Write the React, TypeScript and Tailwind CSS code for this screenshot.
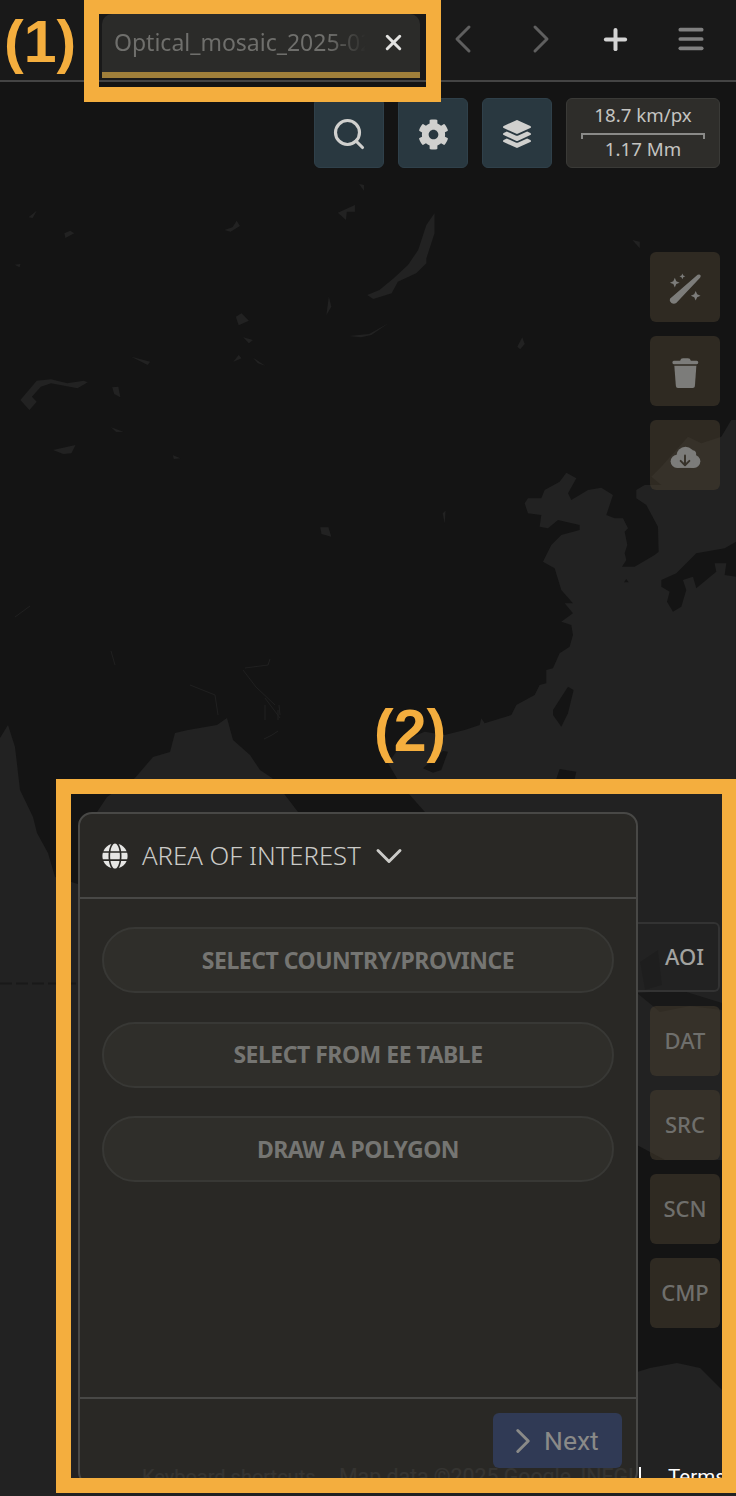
import { ChevronDown, ChevronLeft, ChevronRight, Menu, Plus, Search, X } from "lucide-react";
import type { ReactNode } from "react";
import { FaCog, FaGlobe, FaLayerGroup } from "react-icons/fa";

const LAND = "#141414";
const SEA = "#222222";

// [x,y] lists in reference px
const seaShapes = [
  "0,738 8,725 15,747 20,790 33,817 37,833 48,853 55,877 78,884 736,884 736,1496 0,1496",
  "135,778 153,757 170,752 175,733 188,730 217,725 227,718 233,740 250,755 260,770 272,778 298,812 97,812 107,797",
];

// traced at 3x from the east coast crop, drawn in its own group
const eastSea =
  "230,945 170,935 110,960 60,1030 90,1080 123,1122 174,1180 174,1400 1104,1400 1104,0 1090,0 1060,50 1000,70 960,50 880,140 850,170 880,195 830,195 805,210 805,235 835,255 870,320 872,395 860,405 800,440 762,440 775,420 770,400 778,375 770,335 780,325 765,295 740,295 715,285 735,225 700,203 660,210 610,240 600,220 625,175 595,158 575,185 530,210 520,235 480,235 470,250 480,280 520,285 515,320 540,325 570,300 635,315 635,330 580,345 550,375 525,425 560,445 580,510 615,550 590,550 615,580 580,605 610,615 615,645 605,680 575,700 555,745 535,750 535,790 515,795 500,825 445,855 430,885 350,910 340,895 335,915 290,930";

const eastLand = [
  "880,480 925,460 985,400 1070,385 1104,365 1104,470 1070,465 1075,430 1040,430 1045,455 985,505 975,470 945,480 955,510 940,560 915,575 897,545 905,515 880,500",
  "555,870 600,800 617,810 600,880 580,920 555,885",
  "165,1045 225,993 240,995 220,1050 195,1058",
  "565,1077 575,1047 625,1055 620,1077",
  "768,487 775,477 782,487",
];

// lakes and other flecks, traced from the crop of the north
const northFlecks = [
  "1065,130 1065,190 1045,265 1045,280 1020,310 975,335 960,370 915,387 900,375 930,360 965,325 1000,285 1025,240 1045,165",
  "50,690 90,632 125,628 165,640 205,632 215,637 190,655 125,640 100,650 78,680 90,695 72,720",
  "578,440 592,430 610,452 585,466",
  "550,180 570,172 580,152 588,168 565,185",
  "158,190 172,182 182,190 160,204",
  "130,840 185,825 175,850 155,852",
  "275,652 290,650 295,682 280,672",
  "322,560 368,575 362,585",
  "800,1072 805,1072 812,1100 788,1092 785,1072",
  "800,435 806,380 812,410",
  "1268,530 1280,502 1286,522 1275,538",
  "828,128 870,105 870,125 850,125 848,150",
  "596,502 620,510 610,520",
  "572,575 585,555 592,565",
  "620,563 650,587 632,580",
  "855,498 905,492 952,460 910,495 885,502",
  "272,772 302,785 285,786",
  "880,42 892,45 892,62",
  "70,142 90,122 80,144",
  "1085,1030 1092,1022 1090,1060",
  "36,284 50,282 48,292",
  "424,856 442,865 426,867",
  "1550,210 1568,215 1568,235",
];

function Sparkle({ x, y, r }: { x: number; y: number; r: number }) {
  const k = r * 0.3;
  return (
    <polygon
      points={`${x},${y - r} ${x + k},${y - k} ${x + r},${y} ${x + k},${y + k} ${x},${y + r} ${x - k},${y + k} ${x - r},${y} ${x - k},${y - k}`}
    />
  );
}

function WandIcon() {
  return (
    <svg width="70" height="70" viewBox="0 0 70 70" fill="currentColor">
      <path d="M19.5 47 L48 22.5 Q50 21.5 51 23 Q51.5 24.5 50.5 25.5 L26 51.5 Q23.5 53 21 51.5 Q18.5 49.5 19.5 47 Z" />
      <Sparkle x={24.5} y={30.5} r={5} />
      <Sparkle x={32.3} y={24} r={3} />
      <Sparkle x={46} y={44} r={5} />
    </svg>
  );
}

function TrashIcon() {
  return (
    <svg width="70" height="70" viewBox="0 0 70 70" fill="currentColor">
      <path d="M30 24.5 Q30.5 22 33 22 L38 22 Q40.5 22 41 24.5 L47 24.5 Q48.7 24.5 48.7 26.2 Q48.7 28 47 28 L23.5 28 Q22 28 22 26.2 Q22 24.5 23.5 24.5 Z" />
      <path d="M24 29.5 L46.7 29.5 L45.2 50.5 Q45 52.5 43 52.5 L27.7 52.5 Q25.8 52.5 25.6 50.5 Z" />
    </svg>
  );
}

function CloudIcon() {
  return (
    <svg width="70" height="70" viewBox="0 0 70 70">
      <g fill="currentColor">
        <circle cx="35.5" cy="36" r="9.4" />
        <circle cx="27" cy="41.5" r="6.8" />
        <circle cx="44" cy="41.5" r="6.8" />
        <circle cx="42.5" cy="34" r="4" />
        <rect x="27" y="40" width="17" height="8.3" />
      </g>
      <g fill="none" stroke="#37322a" strokeWidth="2" strokeLinecap="round" strokeLinejoin="round">
        <path d="M35 35.5 V45" />
        <path d="M30.5 41 L35 45.5 L39.5 41" />
      </g>
    </svg>
  );
}

function ToolButton({ blue, children }: { blue?: boolean; children: ReactNode }) {
  return (
    <div
      className={`flex h-[70px] w-[70px] items-center justify-center rounded-md border ${
        blue ? "border-[#2f404a] bg-[#293840] text-[#d0d0ce]" : "border-transparent bg-[#4a4030]/50 text-[#7c7c7a]"
      }`}
    >
      {children}
    </div>
  );
}

function StepTab({ label }: { label: string }) {
  return (
    <div className="flex h-[70px] w-[70px] items-center justify-center rounded-md bg-[#4a4030]/50 pb-[2px] text-[22px] font-medium text-[#6f6f6c]">
      {label}
    </div>
  );
}

function ActionPill({ label }: { label: string }) {
  return (
    <div className="flex h-[66px] items-center justify-center rounded-full border-2 border-[#383835] bg-[#2f2e2a] text-[23px] font-bold tracking-[-0.5px] text-[#757572]">
      {label}
    </div>
  );
}

export default function App() {
  return (
    <div className="relative h-[1496px] w-[736px] overflow-hidden bg-[#141414] font-['Noto_Sans',sans-serif]">
      <svg className="absolute inset-0" width="736" height="1496" viewBox="0 0 736 1496">
        <rect width="736" height="1496" fill={LAND} />
        {seaShapes.map((p) => (
          <polygon key={p} points={p} fill={SEA} />
        ))}
        <polygon points="637,1145 665,1160 736,1160 736,1400 722,1390 700,1368 677,1363 650,1368 637,1372" fill={LAND} />
        <polygon points="640,962 658,950 662,985 645,990" fill="#181818" />
        <polygon points="637,993 680,990 722,1003 722,1010 690,1006 660,1012" fill="#181818" />
        <line x1="0" y1="983.5" x2="76" y2="983.5" stroke="#191919" strokeWidth="2" strokeDasharray="12 4" />
        <g transform="translate(368 420) scale(0.3333)">
          <polygon points={eastSea} fill={SEA} />
          {eastLand.map((p) => (
            <polygon key={p} points={p} fill={LAND} />
          ))}
        </g>
        <g transform="translate(0 170) scale(0.408 0.3333)">
          {northFlecks.map((p) => (
            <polygon key={p} points={p} fill="#222222" />
          ))}
        </g>
        <g stroke="#202020" strokeWidth="1" fill="none">
          <path d="M15 617 L30 606" />
          <path d="M111 651 L115 665" />
          <path d="M190 685 L215 695 L218 715" />
          <path d="M245 668 L268 665 L270 659" />
          <path d="M265 698 L280 718" />
          <path d="M265 705 L265 720" />
          <path d="M279 705 L280 715" />
          <path d="M264 739 L272 735" />
          <path d="M278 731 L272 735" />
          <path d="M243 670 L256 687 L275 705" />
          <path d="M278 710 L278 720" />
        </g>
      </svg>

      <div className="absolute bottom-[4px] left-[142px] flex h-[28px] items-start whitespace-nowrap font-['Roboto',sans-serif] leading-[26px] text-white">
        <span className="w-[197px] shrink-0 text-[20px]">Keyboard shortcuts</span>
        <span className="w-[300px] shrink-0 text-[21.3px]">Map data ©2025 Google, INEGI</span>
        <span className="mt-[3px] h-[23px] w-[2px] shrink-0 bg-white" />
        <span className="ml-[27px] shrink-0 text-[20.6px]">Terms</span>
      </div>

      <div className="relative flex h-full flex-col">
        <div className="flex h-[82px] shrink-0 items-start border-b-2 border-[#444444] bg-[#191919] pl-[102px] pt-[14px]">
          <div className="flex h-[64px] w-[318px] flex-col overflow-hidden rounded-t-[10px] bg-[#2b2b29]">
            <div className="flex h-[58px] items-center pb-[2px]">
              <span className="ml-[12px] w-[252px] overflow-hidden whitespace-nowrap text-[23px] text-[#6f6f6c] [mask-image:linear-gradient(to_right,black_85%,transparent)]">
                Optical_mosaic_2025-02
              </span>
              <X className="ml-[14.5px] text-[#e2e2e0]" size={25} strokeWidth={2.9} />
            </div>
            <div className="h-[6px] bg-[#a07f3a]" />
          </div>
          <div className="ml-[4px] flex h-[50px] items-center text-[#5f5f5f]">
            <div className="flex w-[78px] justify-center">
              <ChevronLeft size={48} strokeWidth={1.5} />
            </div>
            <div className="flex w-[78px] justify-center">
              <ChevronRight size={48} strokeWidth={1.5} />
            </div>
            <div className="flex w-[70px] justify-center text-[#d4d4d4]">
              <Plus size={33} strokeWidth={2.9} />
            </div>
            <div className="flex w-[82px] justify-center text-[#808080]">
              <Menu size={32} strokeWidth={2.8} />
            </div>
          </div>
        </div>

        <div className="flex justify-end gap-[14px] pr-[16px] pt-[16px]">
          <ToolButton blue>
            <Search className="mt-[2px]" size={36} strokeWidth={2.1} />
          </ToolButton>
          <ToolButton blue>
            <FaCog className="mt-[2px]" size={31} />
          </ToolButton>
          <ToolButton blue>
            <FaLayerGroup className="mt-[2px]" size={28} />
          </ToolButton>
          <div className="flex h-[70px] w-[154px] flex-col items-center rounded-md border border-[#3a3a37] bg-[#2e2d2a] pt-[4px] text-[18.7px] leading-[24px] text-[#c4c4c1]">
            <span className="h-[26px]">18.7 km/px</span>
            <span className="mt-[4px] h-[6px] w-[124px] border-x-2 border-t-2 border-[#8a8a88]" />
            <span className="-mt-[2px] h-[24px]">1.17 Mm</span>
          </div>
        </div>

        <div className="mt-[84px] flex flex-col items-end gap-[14px] pr-[16px]">
          <ToolButton>
            <WandIcon />
          </ToolButton>
          <ToolButton>
            <TrashIcon />
          </ToolButton>
          <ToolButton>
            <CloudIcon />
          </ToolButton>
        </div>

        <div className="ml-[78px] mt-[322px] flex items-start">
          <div className="flex h-[674px] w-[560px] flex-col rounded-[14px] border-2 border-[#484846] bg-[#2a2926]/95">
            <div className="flex h-[85px] shrink-0 items-center border-b-2 border-[#484846] pl-[22px] text-[#cbcbc8]">
              <FaGlobe className="text-[#e6e6e4]" size={26} />
              <span className="ml-[14px] pt-[2px] text-[25.7px] font-light">AREA OF INTEREST</span>
              <ChevronDown className="ml-[6px]" size={44} strokeWidth={1.6} />
            </div>
            <div className="flex flex-1 flex-col gap-[28.5px] px-[22px] pt-[28px]">
              <ActionPill label="SELECT COUNTRY/PROVINCE" />
              <ActionPill label="SELECT FROM EE TABLE" />
              <ActionPill label="DRAW A POLYGON" />
            </div>
            <div className="flex h-[87px] shrink-0 justify-end border-t-2 border-[#484846] pr-[14px] pt-[14px]">
              <div className="flex h-[55px] w-[129px] items-center rounded-md bg-[#303a55] pl-[9px] font-['Roboto',sans-serif] text-[26.5px] text-[#8a8a88]">
                <ChevronRight size={42} strokeWidth={1.7} />
                <span>Next</span>
              </div>
            </div>
          </div>
          <div className="ml-[12px] flex flex-col gap-[14px] pt-[110px]">
            <div className="-ml-[12px] flex h-[70px] w-[82px] items-center justify-end rounded-r-md border-2 border-l-0 border-[#333333] bg-[#232323]/60 pb-[2px] pr-[14px] text-[22px] font-medium text-[#a3a3a0]">
              AOI
            </div>
            <StepTab label="DAT" />
            <StepTab label="SRC" />
            <StepTab label="SCN" />
            <StepTab label="CMP" />
          </div>
        </div>
      </div>

      <div className="absolute left-[84px] top-0 h-[102px] w-[357px] border-x-[15px] border-b-[15px] border-t-[14px] border-[#f4ae3e]" />
      <div className="absolute left-[56px] top-[779px] h-[714px] w-[680px] border-[15px] border-r-[14px] border-[#f4ae3e]" />
      <div className="absolute left-[4px] top-[8px] font-['Liberation_Sans',sans-serif] text-[59px] font-bold leading-[68px] text-[#f4ae3e]">
        (1)
      </div>
      <div className="absolute left-[374px] top-[697px] font-['Liberation_Sans',sans-serif] text-[59px] font-bold leading-[68px] text-[#f4ae3e]">
        (2)
      </div>
      <div className="absolute inset-x-0 bottom-0 h-[3px] bg-[#222222]" />
    </div>
  );
}
